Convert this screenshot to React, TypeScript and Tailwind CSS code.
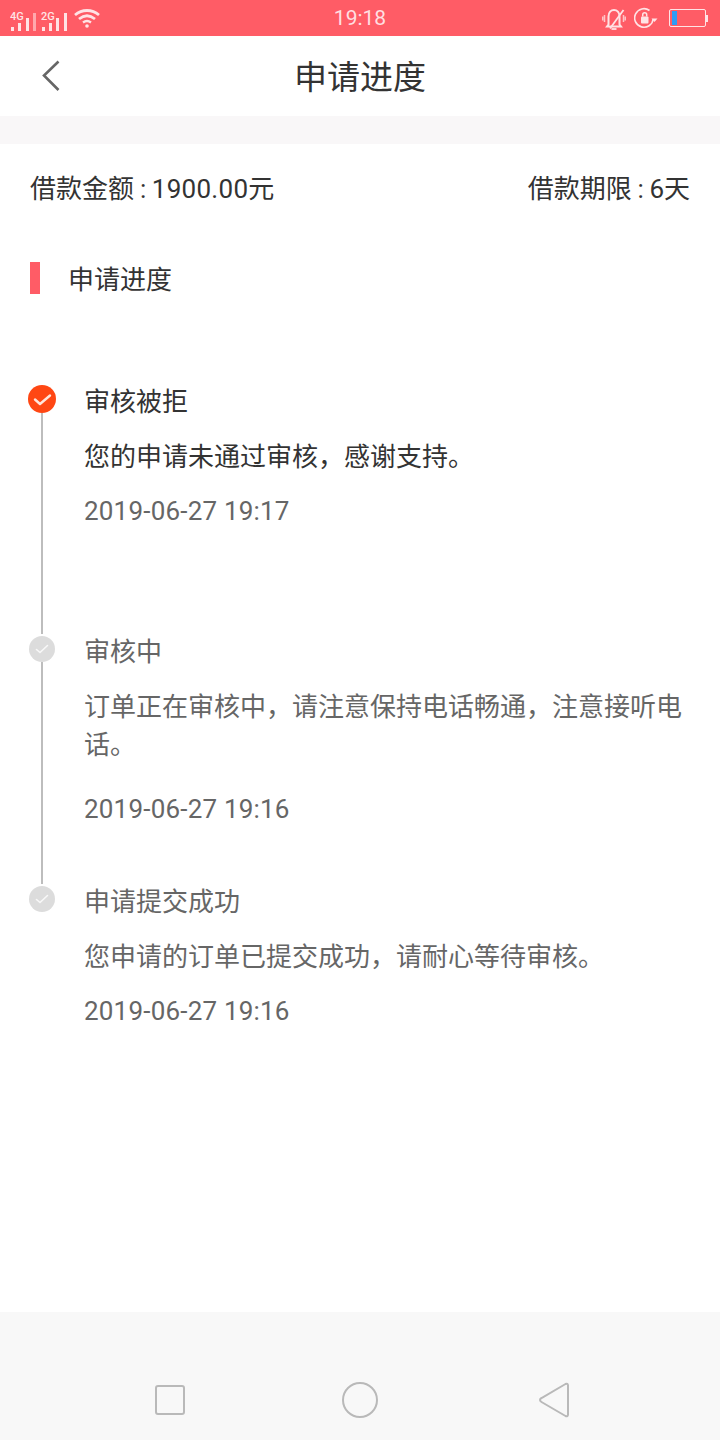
const font = "font-['Roboto','Noto_Sans_CJK_SC',sans-serif]";

function Bars({ label, dimLast, x }: { label: string; dimLast?: boolean; x: number[] }) {
  return (
    <svg width="27" height="28" viewBox="0 0 27 28" className="shrink-0">
      <text x="0" y="16" fontSize="11" fontWeight="500" fontFamily="Roboto, sans-serif" fill="#ffe3e5">{label}</text>
      <rect x={x[0]} y="23" width="3" height="4" fill="#ffe3e5" />
      <rect x={x[1]} y="19" width="3" height="8" fill="#ffe3e5" />
      <rect x={x[2]} y="14" width="3" height="13" fill="#ffe3e5" />
      <rect x={x[3]} y="9" width="3" height="18" fill={dimLast ? "#ffa8ad" : "#ffe3e5"} />
    </svg>
  );
}

function Check({ active }: { active?: boolean }) {
  return active ? (
    <svg width="28" height="28" viewBox="0 0 28 28" className="block">
      <circle cx="14" cy="14" r="14" fill="#ff4713" />
      <path d="M7 14.500L12 19L22 10.500" fill="none" stroke="#ffe6dc" strokeWidth="2.400" strokeLinecap="round" strokeLinejoin="round" />
    </svg>
  ) : (
    <svg width="26" height="26" viewBox="0 0 26 26" className="block">
      <circle cx="13" cy="13" r="13" fill="#dcdcdc" />
      <path d="M7.500 13.500l3.500 3L18.500 9.500" fill="none" stroke="#f8f8f8" strokeWidth="1.600" strokeLinecap="round" strokeLinejoin="round" />
    </svg>
  );
}

function Step({
  title,
  desc,
  time,
  active,
  last,
  wrapped,
  heightClass,
}: {
  title: string;
  desc: string;
  time: string;
  active?: boolean;
  last?: boolean;
  wrapped?: boolean;
  heightClass: string;
}) {
  const color = active ? "text-[#333333]" : "text-[#666666]";
  return (
    <div className={`flex ${heightClass}`}>
      <div className="w-[84px] shrink-0 flex">
        <div className="ml-[28px] w-[28px] flex flex-col items-center">
          <div className={active ? "mt-0" : "mt-[1px]"}>
            <Check active={active} />
          </div>
          {!last && <div className="w-[2px] flex-1 mb-[1px] bg-[#bdbdbd]" />}
        </div>
      </div>
      <div className="flex-1 pr-[37px]">
        <div className={`mt-[1px] text-[26px] leading-[32px] ${color}`}>{title}</div>
        <div className={`mt-[20px] text-[26px] leading-[38px] ${color}`}>{desc}</div>
        <div className={`${wrapped ? "mt-[27px]" : "mt-[17px]"} text-[26px] leading-[36px] tracking-[0.2px] text-[#666666]`}>{time}</div>
      </div>
    </div>
  );
}

export default function App() {
  return (
    <div className={`w-[720px] h-[1440px] bg-white flex flex-col overflow-hidden ${font}`}>
      <div className="h-[36px] bg-[#ff5c66] flex items-center justify-between shrink-0 pl-[10px] pr-[12px] relative">
        <div className="flex items-center gap-[4px]">
          <Bars label="4G" dimLast x={[1, 8, 16, 23]} />
          <Bars label="2G" x={[1, 8, 15, 23]} />
          <svg width="26" height="20" viewBox="0 0 26 20" className="ml-[2px]">
            <path d="M1 7C8 1 18 1 25 7" fill="none" stroke="#ffe3e5" strokeWidth="2.800" />
            <path d="M5 11c5-4 11-4 16 0" fill="none" stroke="#ffe3e5" strokeWidth="2.800" />
            <path d="M9 14.500c2.500-1.800 5.500-1.800 8 0" fill="none" stroke="#ffe3e5" strokeWidth="2.400" />
            <circle cx="13" cy="18" r="1.800" fill="#ffe3e5" />
          </svg>
        </div>
        <div className="absolute left-0 top-[2px] w-[720px] text-center text-[21px] leading-[32px] text-[#ffdfe1] pointer-events-none">19:18</div>
        <div className="flex items-center gap-[8px]">
          <svg width="24" height="24" viewBox="0 0 24 24">
            <path d="M6.500 18.500V10.500c0-4 2.500-6.500 5.500-6.500s5.500 2.500 5.500 6.500v8l1.500 2H5z" fill="none" stroke="#ffe3e5" strokeWidth="2" />
            <path d="M9.500 23h5" stroke="#ffe3e5" strokeWidth="1.800" />
            <path d="M21.500 4L8 22.500" stroke="#ffe3e5" strokeWidth="1.800" />
            <path d="M2.500 9v7M.7 10.500v4M21.500 9v7M23.300 10.500v4" stroke="#ffc4c7" strokeWidth="1.500" />
          </svg>
          <svg width="24" height="24" viewBox="0 0 24 24">
            <path d="M19.200 13A9.300 9.300 0 1 1 15.500 4.500" fill="none" stroke="#ffe3e5" strokeWidth="1.600" />
            <rect x="7" y="10.500" width="7.500" height="7" rx="1" fill="#ffe3e5" />
            <path d="M8.700 10.500V8.700a2 2 0 0 1 4 0v1.800" fill="none" stroke="#ffe3e5" strokeWidth="1.500" />
            <path d="M17.500 12.500h6l-3 3.500z" fill="#ffe3e5" />
          </svg>
          <div className="ml-[3px] flex items-center">
            <div className="w-[37px] h-[18px] border border-[#ffe3e5] rounded-[2px] pl-[2px] py-[1px]">
              <div className="w-[5px] h-full bg-[#2f9bf5]" />
            </div>
            <div className="w-[2px] h-[7px] bg-[#ffe3e5]" />
          </div>
        </div>
      </div>

      <div className="h-[80px] shrink-0 flex items-center justify-center relative">
        <svg width="20" height="32" viewBox="0 0 20 32" className="absolute left-[41px] top-[24px]">
          <path d="M17.500 1.500L3 15.500l14.500 14.500" fill="none" stroke="#666666" strokeWidth="2.600" />
        </svg>
        <div className="mt-[4px] text-[33px] text-[#333333]">申请进度</div>
      </div>
      <div className="h-[28px] shrink-0 bg-[#f9f7f8]" />

      <div className="flex justify-between px-[30px] pt-[26px] text-[26px] leading-[38px] text-[#333333]">
        <span>
          借款金额<span className="tracking-[-0.5px]"> : </span>
          <span className="tracking-[0.3px]">1900.00</span>元
        </span>
        <span>
          借款期限<span className="tracking-[-0.5px]"> : </span>6天
        </span>
      </div>

      <div className="flex items-center h-[32px] mt-[54px] pl-[30px]">
        <div className="w-[10px] h-[32px] bg-[#ff5c66]" />
        <div className="ml-[28px] mt-[4px] text-[26px] leading-[32px] text-[#333333]">申请进度</div>
      </div>

      <div className="mt-[91px]">
        <Step
          active
          heightClass="h-[250px]"
          title="审核被拒"
          desc="您的申请未通过审核，感谢支持。"
          time="2019-06-27 19:17"
        />
        <Step
          wrapped
          heightClass="h-[250px]"
          title="审核中"
          desc="订单正在审核中，请注意保持电话畅通，注意接听电话。"
          time="2019-06-27 19:16"
        />
        <Step
          last
          heightClass="h-[160px]"
          title="申请提交成功"
          desc="您申请的订单已提交成功，请耐心等待审核。"
          time="2019-06-27 19:16"
        />
      </div>

      <div className="flex-1" />
      <div className="h-[128px] shrink-0 bg-[#f8f8f8] flex items-start pl-[155px] pt-[70px]">
        <div className="mt-[3px] w-[30px] h-[30px] border-2 border-[#b9b9b9] rounded-[3px]" />
        <div className="ml-[157px] w-[36px] h-[36px] border-2 border-[#b9b9b9] rounded-full" />
        <svg width="30" height="36" viewBox="0 0 30 36" className="ml-[161px]">
          <path d="M26.500 2c1.500-.8 2.500 0 2.500 1.500v29c0 1.500-1 2.300-2.500 1.500L2.500 20c-2-1.200-2-3 0-4z" fill="none" stroke="#b9b9b9" strokeWidth="2" />
        </svg>
      </div>
    </div>
  );
}
